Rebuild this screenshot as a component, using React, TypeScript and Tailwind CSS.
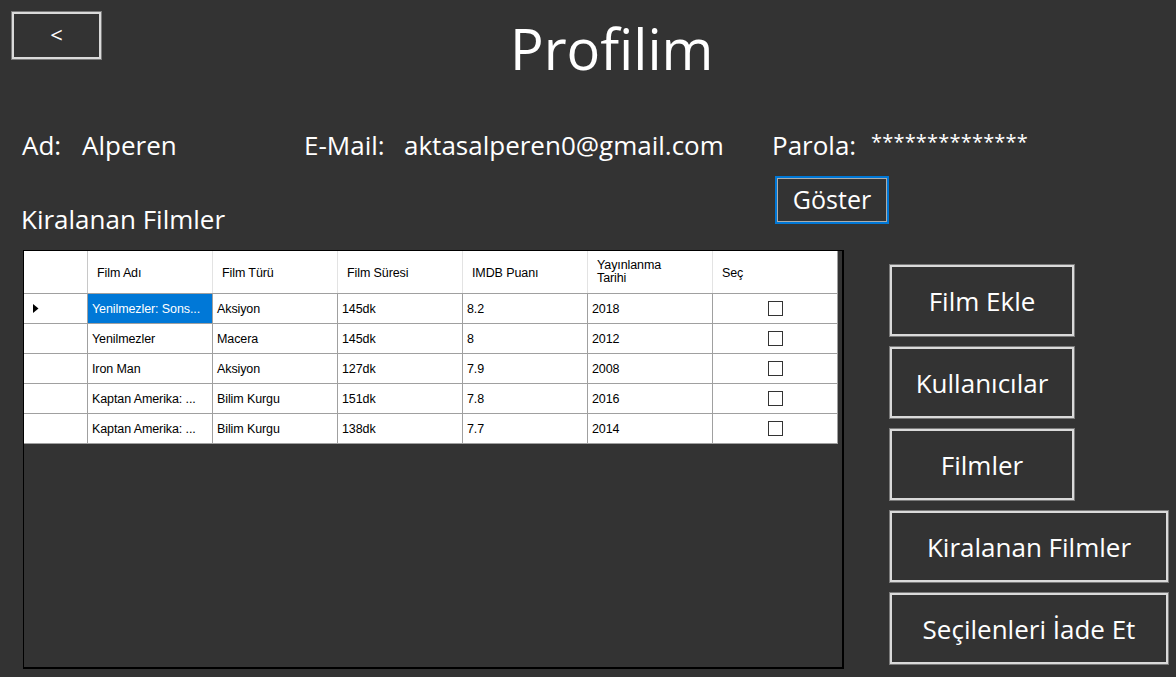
import React from "react";

type Row = { ad: string; tur: string; sure: string; imdb: string; yil: string; selected?: boolean };

const rows: Row[] = [
  { ad: "Yenilmezler: Sons...", tur: "Aksiyon", sure: "145dk", imdb: "8.2", yil: "2018", selected: true },
  { ad: "Yenilmezler", tur: "Macera", sure: "145dk", imdb: "8", yil: "2012" },
  { ad: "Iron Man", tur: "Aksiyon", sure: "127dk", imdb: "7.9", yil: "2008" },
  { ad: "Kaptan Amerika: ...", tur: "Bilim Kurgu", sure: "151dk", imdb: "7.8", yil: "2016" },
  { ad: "Kaptan Amerika: ...", tur: "Bilim Kurgu", sure: "138dk", imdb: "7.7", yil: "2014" },
];

function NavButton({ label, wide }: { label: string; wide?: boolean }) {
  return (
    <div className={`${wide ? "w-[280px]" : "w-[186px]"} h-[73px] border border-[#7a7a7a]`}>
      <div className="w-full h-full border-2 border-[#dadada] flex items-center justify-center text-[26px] leading-none text-white">
        {label}
      </div>
    </div>
  );
}

export default function App() {
  return (
    <div className="w-[1176px] h-[677px] bg-[#333333] overflow-hidden text-white font-['Open_Sans',sans-serif]">
      {/* Header */}
      <div className="h-[130px] flex items-start">
        <div className="ml-[11px] mt-[11px] w-[91px] h-[49px] border border-[#7a7a7a]">
          <div className="w-full h-full border-2 border-[#dadada] flex items-center justify-center text-[22px] leading-none pb-[4px]">
            &lt;
          </div>
        </div>
        <div className="ml-[408px] mt-[20px] text-[56px] leading-[56px]">Profilim</div>
      </div>

      {/* Info row */}
      <div className="h-[30px] flex items-start text-[26px] leading-[30px] whitespace-nowrap">
        <span className="ml-[22px] w-[60px]">Ad:</span>
        <span className="w-[222px]">Alperen</span>
        <span className="w-[100px]">E-Mail:</span>
        <span className="w-[368px]">aktasalperen0@gmail.com</span>
        <span className="w-[99px]">Parola:</span>
        <span className="text-[20px] leading-[24px] tracking-[0.2px]">**************</span>
      </div>

      {/* Label + Göster */}
      <div className="h-[90px] flex items-start">
        <div className="ml-[21px] mt-[44px] w-[754px] text-[26px] leading-[30px]">Kiralanan Filmler</div>
        <div className="mt-[16px] w-[114px] h-[48px] border-2 border-[#0078d7]">
          <div className="w-full h-full border border-[#adadad] flex items-center justify-center text-[25px] leading-none pb-[2px]">
            Göster
          </div>
        </div>
      </div>

      {/* Table + buttons */}
      <div className="flex items-start">
        <div className="ml-[23px] w-[821px] h-[419px] border-l border-t border-r-2 border-b-2 border-black bg-[#333333]">
          <div className="w-[814px] bg-white text-black font-['Liberation_Sans',Arial,sans-serif] text-[12.5px] leading-[14px] tracking-[-0.1px]">
            {/* header */}
            <div className="flex h-[43px] border-b border-[#a0a0a0]">
              <div className="w-[64px] shrink-0 border-r border-[#c8c8c8]" />
              {["Film Adı", "Film Türü", "Film Süresi", "IMDB Puanı"].map((h) => (
                <div key={h} className="w-[125px] shrink-0 border-r border-[#e3e3e3] flex items-center pl-[9px] pt-[2px]">
                  {h}
                </div>
              ))}
              <div className="w-[125px] shrink-0 border-r border-[#e3e3e3] flex items-center pl-[9px] leading-[13px]">
                <span>
                  Yayınlanma
                  <br />
                  Tarihi
                </span>
              </div>
              <div className="w-[125px] shrink-0 border-r border-[#a0a0a0] flex items-center pl-[9px] pt-[2px]">Seç</div>
            </div>
            {/* rows */}
            {rows.map((r, i) => (
              <div key={i} className="flex h-[30px] border-b border-[#a0a0a0]">
                <div className="w-[64px] shrink-0 border-r border-[#a0a0a0] flex items-center pl-[9px]">
                  {r.selected && (
                    <svg width="6" height="9" viewBox="0 0 6 9">
                      <path d="M0 0 L5.5 4.5 L0 9 Z" fill="#000" />
                    </svg>
                  )}
                </div>
                <div
                  className={`w-[125px] shrink-0 border-r border-[#a0a0a0] flex items-center pl-[4px] whitespace-nowrap overflow-hidden ${
                    r.selected ? "bg-[#0078d7] text-white" : ""
                  }`}
                >
                  {r.ad}
                </div>
                <div className="w-[125px] shrink-0 border-r border-[#a0a0a0] flex items-center pl-[4px]">{r.tur}</div>
                <div className="w-[125px] shrink-0 border-r border-[#a0a0a0] flex items-center pl-[4px]">{r.sure}</div>
                <div className="w-[125px] shrink-0 border-r border-[#a0a0a0] flex items-center pl-[4px]">{r.imdb}</div>
                <div className="w-[125px] shrink-0 border-r border-[#a0a0a0] flex items-center pl-[4px]">{r.yil}</div>
                <div className="w-[125px] shrink-0 border-r border-[#a0a0a0] flex items-center justify-center">
                  <div className="w-[15px] h-[15px] border border-[#333333] bg-white" />
                </div>
              </div>
            ))}
          </div>
        </div>
        <div className="ml-[45px] mt-[14px] flex flex-col gap-[9px]">
          <NavButton label="Film Ekle" />
          <NavButton label="Kullanıcılar" />
          <NavButton label="Filmler" />
          <NavButton label="Kiralanan Filmler" wide />
          <NavButton label="Seçilenleri İade Et" wide />
        </div>
      </div>
    </div>
  );
}
